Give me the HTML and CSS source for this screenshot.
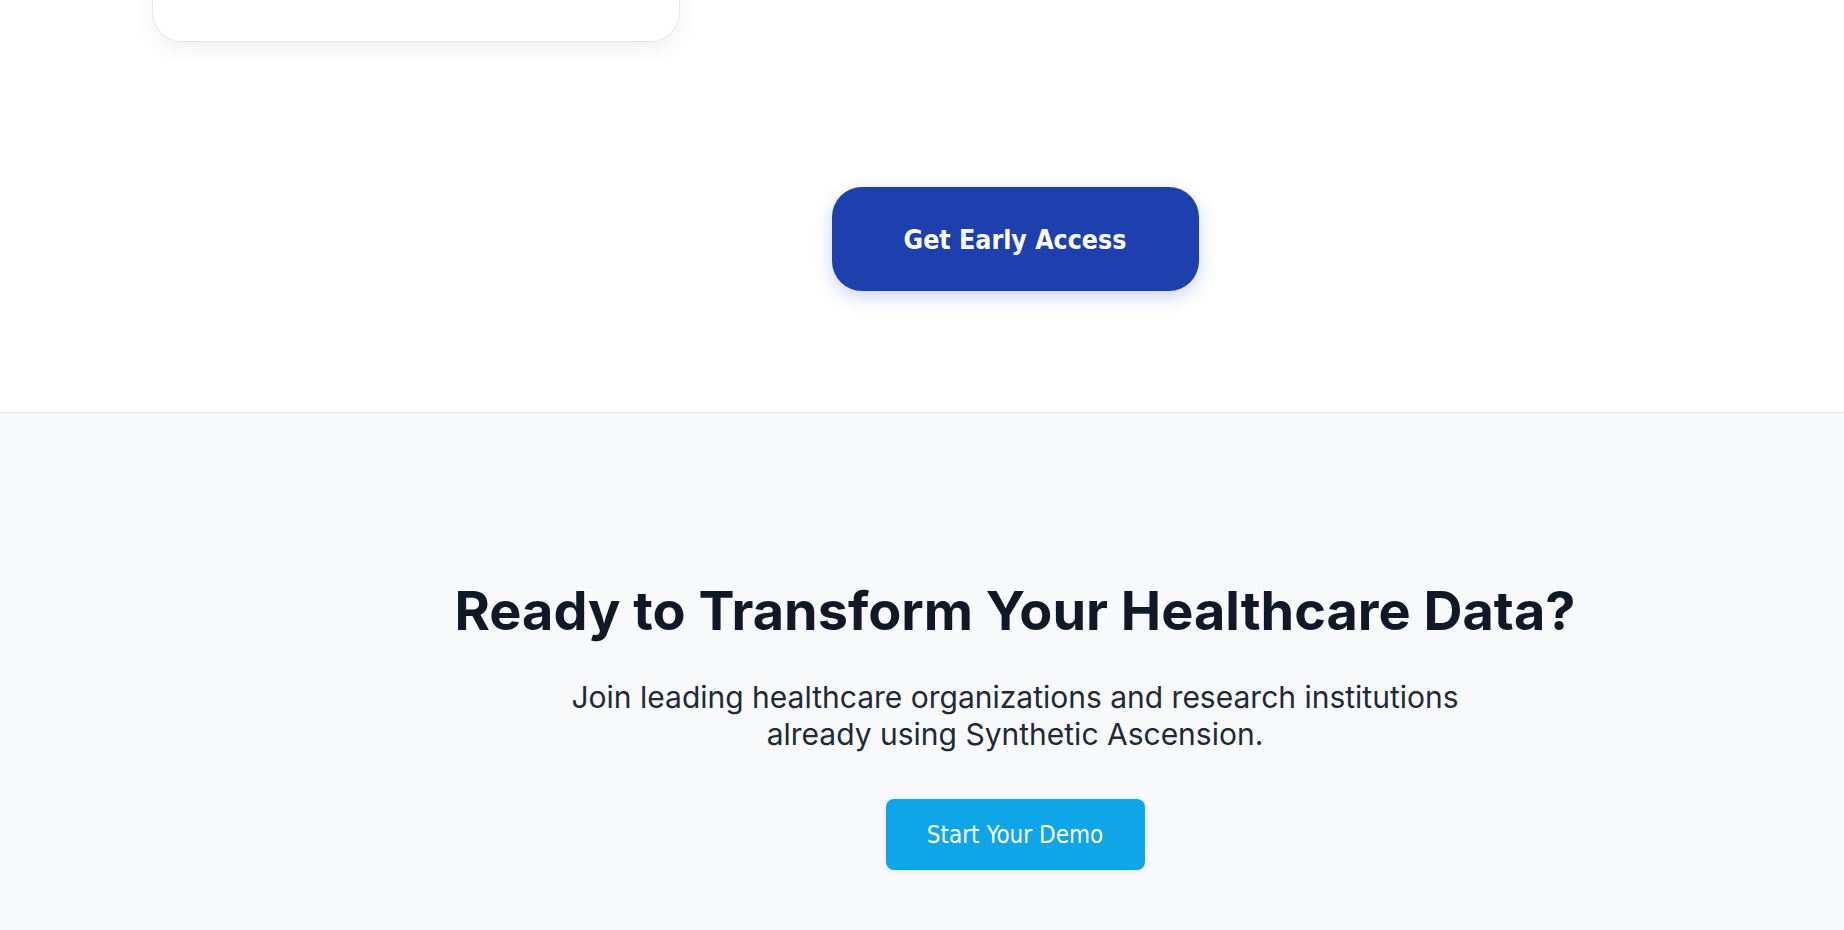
FILE: index.html
```html
<!DOCTYPE html>
<html lang="en">
<head>
<meta charset="utf-8">
<title>Synthetic Ascension</title>
<link rel="stylesheet" href="styles.css">
</head>
<body>
<section class="features">
  <div class="cards">
    <div class="card"></div>
  </div>
  <div class="access">
    <a class="btn-access" href="#">Get Early Access</a>
  </div>
</section>
<section class="cta">
  <h2 class="cta-title">Ready to Transform Your Healthcare Data?</h2>
  <p class="cta-text">Join leading healthcare organizations and research institutions<br>already using Synthetic Ascension.</p>
  <a class="btn-demo" href="#">Start Your Demo</a>
</section>
</body>
</html>
```
FILE: styles.css
```css
* { box-sizing: border-box; }
html, body { margin: 0; padding: 0; }
body {
  background: #ffffff;
  font-family: Inter, "Noto Sans", sans-serif;
  height: 930px;
  overflow: hidden;
}
.features {
  display: flex;
  flex-direction: column;
  background: #ffffff;
  border-bottom: 1px solid #e5e7eb;
  height: 413px;
}
.cards {
  display: flex;
  padding-left: 152px;
}
.card {
  width: 528px;
  height: 200px;
  margin-top: -158px;
  background: #ffffff;
  border: 1px solid #e5e7eb;
  border-radius: 30px;
  box-shadow: 0 8px 20px rgba(0, 0, 0, 0.06);
}
.access {
  padding-left: 186px;
  display: flex;
  justify-content: center;
  margin-top: 145px;
}
.btn-access {
  display: flex;
  align-items: center;
  justify-content: center;
  width: 367px;
  height: 104px;
  border-radius: 30px;
  background: #1e40af;
  color: #ffffff;
  text-decoration: none;
  font-family: "DejaVu Sans Condensed", "DejaVu Sans", sans-serif;
  font-weight: 700;
  font-size: 26.5px;
  box-shadow: 0 6px 18px rgba(30, 64, 175, 0.22);
}
.cta {
  background: #f8f9fb;
  padding-left: 186px;
  display: flex;
  flex-direction: column;
  align-items: center;
  text-align: center;
  height: 517px;
}
.cta-title {
  margin: 165px 0 0;
  font-size: 54px;
  line-height: 65px;
  font-weight: 700;
  color: #111827;
}
.cta-text {
  margin: 36px 0 0;
  font-size: 30px;
  line-height: 36.5px;
  color: #1f2937;
}
.btn-demo {
  margin-top: 47px;
  display: flex;
  align-items: center;
  justify-content: center;
  width: 259px;
  height: 71px;
  border-radius: 8px;
  background: #0ea5e9;
  color: #ffffff;
  text-decoration: none;
  font-family: "DejaVu Sans Condensed", "DejaVu Sans", sans-serif;
  font-size: 24px;
  box-shadow: 0 2px 4px rgba(0, 0, 0, 0.08);
}
```
